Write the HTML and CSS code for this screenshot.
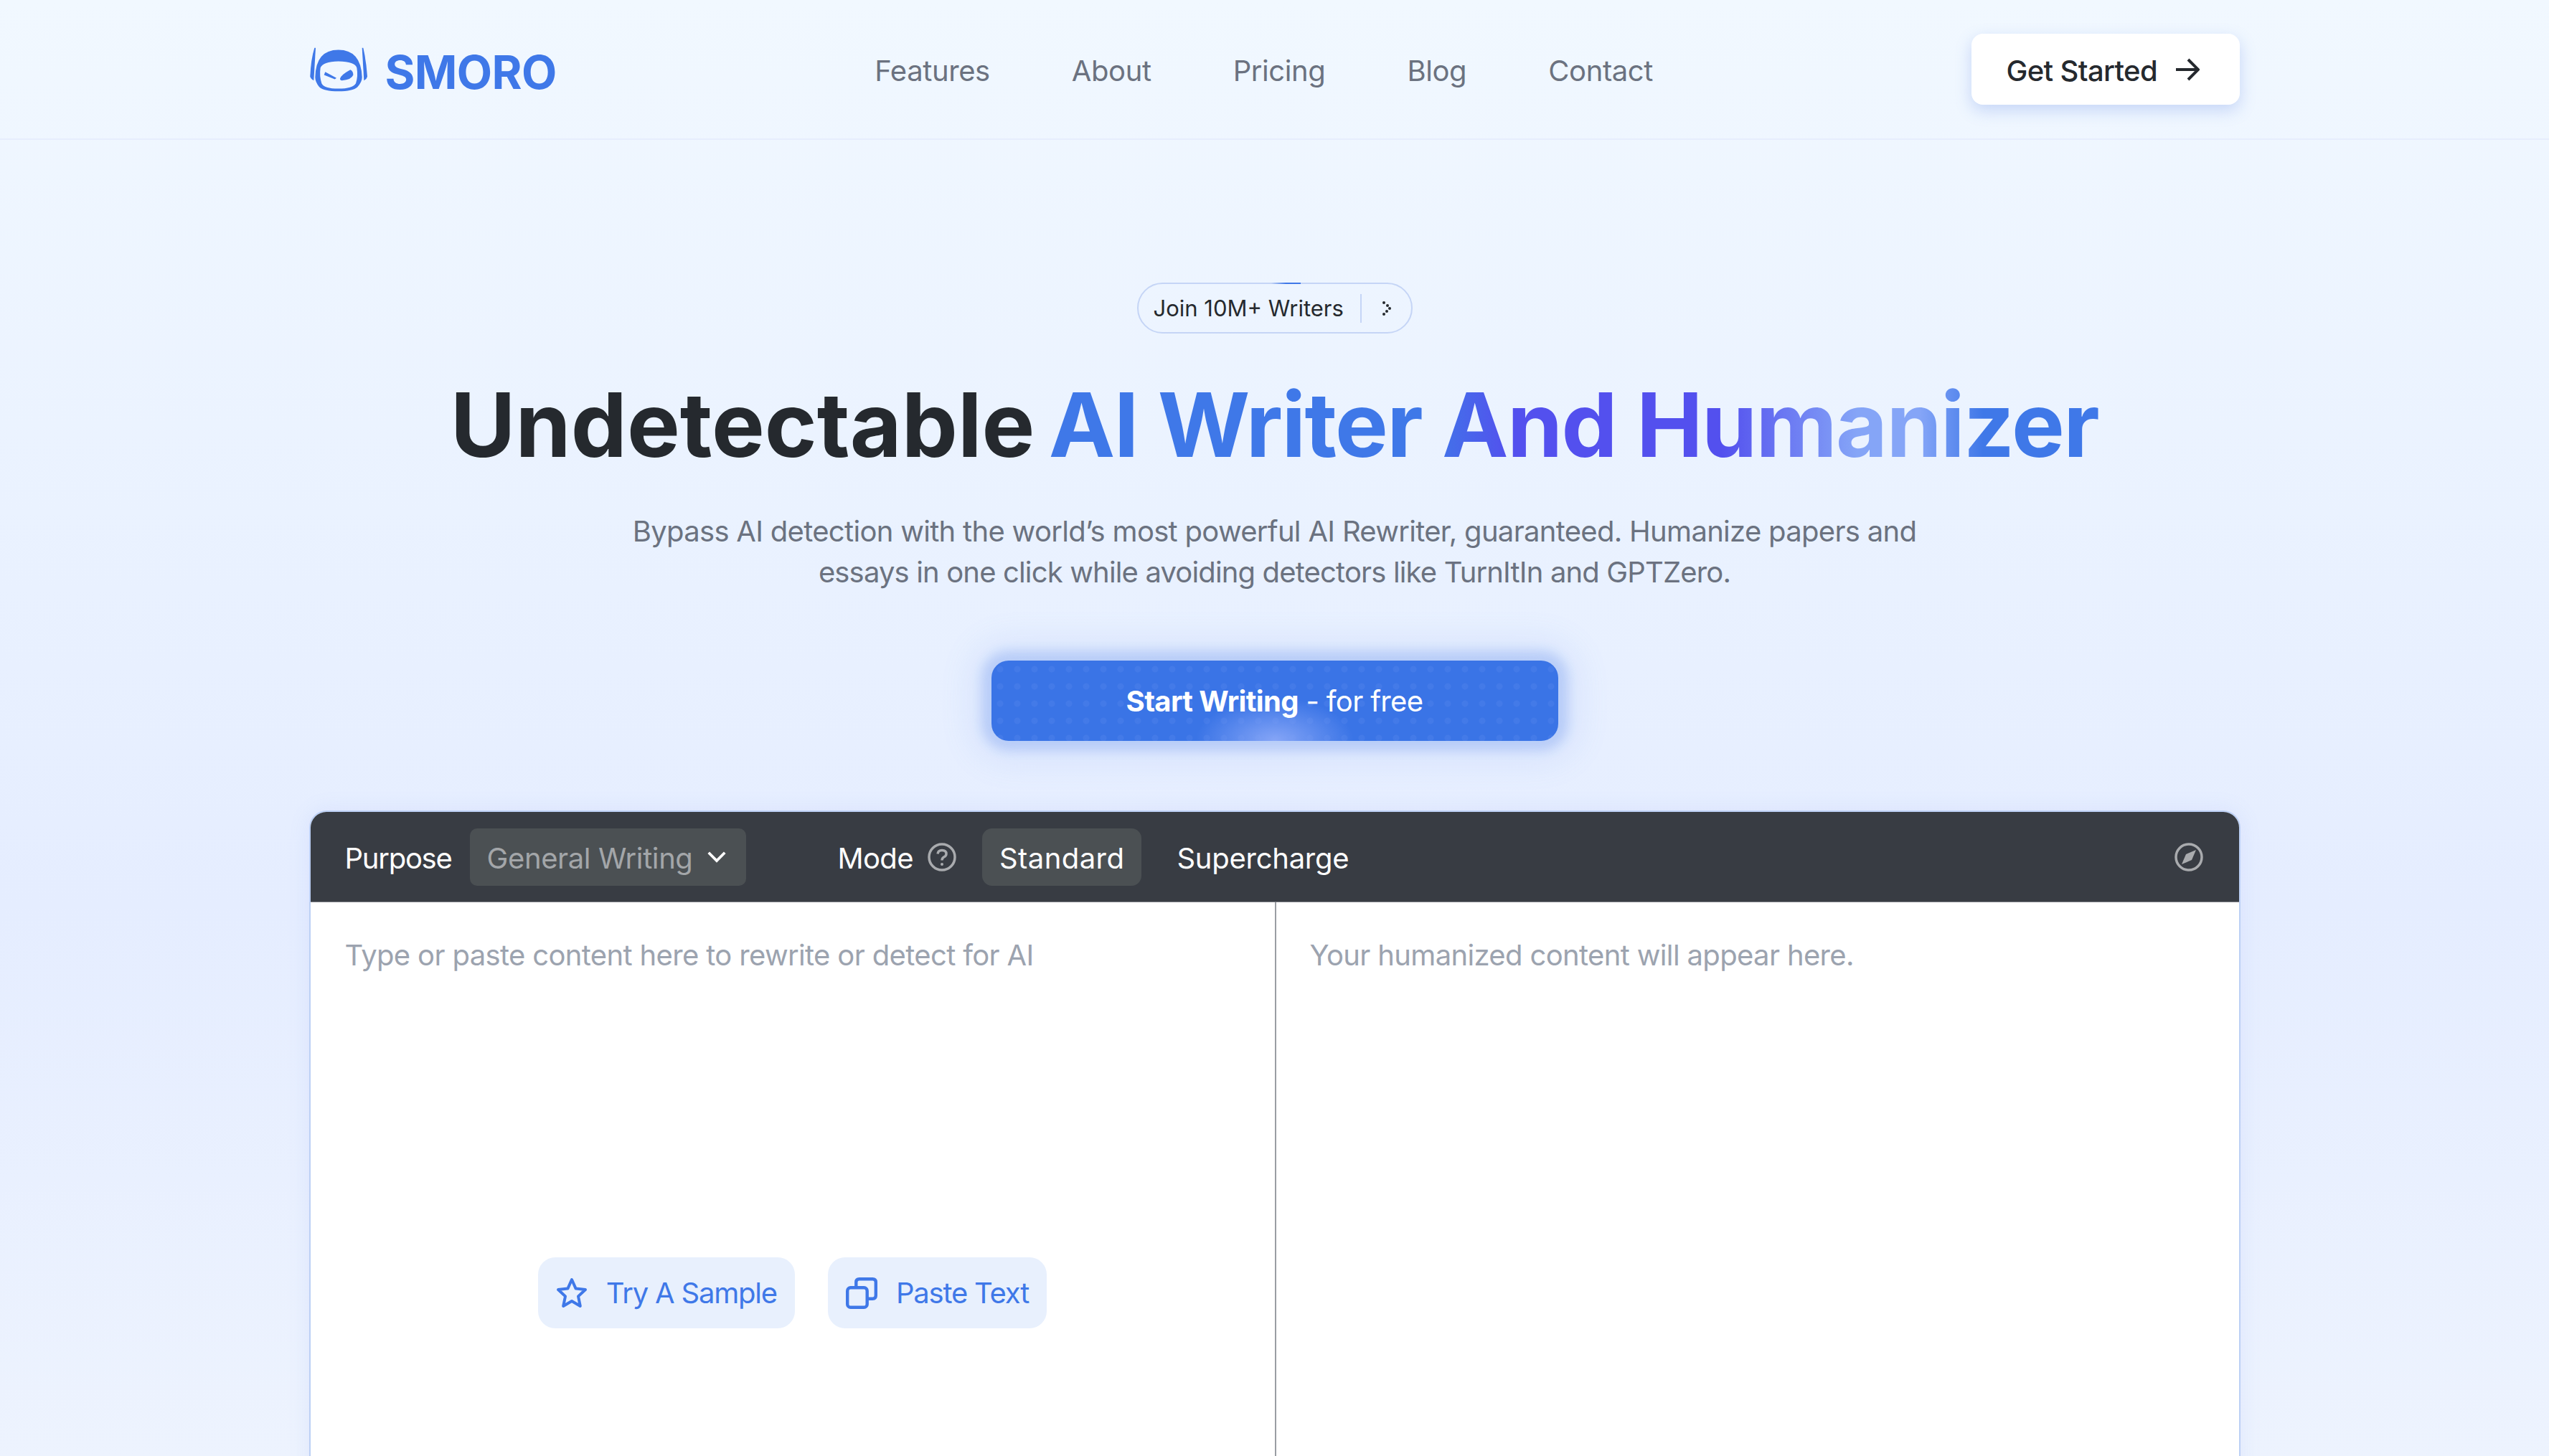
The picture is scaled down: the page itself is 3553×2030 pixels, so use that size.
FILE: index.html
```html
<!DOCTYPE html>
<html lang="en">
<head>
<meta charset="UTF-8">
<meta name="viewport" content="width=device-width, initial-scale=1.0">
<title>Smoro</title>
<link rel="stylesheet" href="styles.css">
</head>
<body>
<header class="nav">
    <div class="nav-inner">
        <a class="logo" href="#">
            <svg class="logo-icon" viewBox="36 50 240 185">
                <path d="M55 52 L60 52 L52 188 Q38 180 37 170 Q40 100 55 52 Z"/>
                <path d="M254 52 L259 52 Q272 110 276 172 Q274 182 262 188 Z"/>
                <path fill-rule="evenodd" d="M58 175 Q60 60 155 60 Q250 60 254 175 Q254 195 235 215 Q215 233 155 233 Q95 233 75 215 Q58 195 58 175 Z M80 135 Q90 110 155 108 Q225 110 232 135 Q238 170 228 200 Q215 222 155 222 Q95 222 85 200 Q75 170 80 135 Z"/>
                <path d="M100 152 L147 178 L140 183 L95 165 Z"/>
                <path d="M162 180 Q165 165 205 143 Q218 150 217 165 Q210 185 170 188 Q162 188 162 180 Z"/>
            </svg>
            <span class="logo-text">SMORO</span>
        </a>
        <nav class="nav-links">
            <a href="#">Features</a>
            <a href="#">About</a>
            <a href="#">Pricing</a>
            <a href="#">Blog</a>
            <a href="#">Contact</a>
        </nav>
        <a class="get-started" href="#">
            <span class="get-started-text">Get Started</span>
            <svg class="arrow" viewBox="0 0 34 32"><path d="M1 16 H32 M18 2 L32 16 L18 30"/></svg>
        </a>
    </div>
</header>

<main class="hero">
    <a class="badge" href="#">
        <span>Join 10M+ Writers</span>
        <span class="badge-sep"></span>
        <svg class="badge-chevron" viewBox="0 0 14 22"><circle cx="3" cy="3" r="2"/><circle cx="8" cy="7" r="2"/><circle cx="11" cy="11" r="2"/><circle cx="7" cy="15" r="2"/><circle cx="3" cy="19" r="2"/></svg>
    </a>
    <h1>Undetectable <span class="gradient">AI Writer And Humanizer</span></h1>
    <p class="lead">Bypass AI detection with the world’s most powerful AI Rewriter, guaranteed. Humanize papers and<br><span class="lead-second">essays in one click while avoiding detectors like TurnItIn and GPTZero.</span></p>
    <a class="cta" href="#"><span><strong>Start Writing</strong> - for free</span></a>
</main>

<section class="editor">
    <div class="toolbar">
        <span class="tool-label purpose-label">Purpose</span>
        <div class="select"><span class="tool-label">General Writing</span>
            <svg class="select-chevron" viewBox="0 0 24 14"><path d="M3 2 L12 11 L21 2"/></svg>
        </div>
        <span class="tool-label mode-label">Mode</span>
        <svg class="help" viewBox="0 0 40 40">
            <circle cx="20" cy="20" r="18"/>
            <path d="M14 15.5 Q14.5 10.5 20 10.5 Q26 10.5 26 15.5 Q26 18.5 22.5 20 Q20 21.5 20 24.5"/>
            <circle class="help-dot" cx="20" cy="30" r="2"/>
        </svg>
        <span class="mode active"><span class="tool-label">Standard</span></span>
        <span class="mode"><span class="tool-label">Supercharge</span></span>
        <svg class="compass" viewBox="0 0 40 40">
            <circle cx="20" cy="20" r="18"/>
            <path class="needle" d="M30 10 L24 24 L10 30 L16 16 Z"/>
        </svg>
    </div>
    <div class="panes">
        <div class="pane pane-left">
            <p class="placeholder">Type or paste content here to rewrite or detect for AI</p>
            <div class="actions">
                <button type="button" class="action">
                    <svg class="action-icon" viewBox="0 0 44 44"><path d="M22 3 L27.6 15.6 L41 17 L31 26.4 L33.8 40 L22 33 L10.2 40 L13 26.4 L3 17 L16.4 15.6 Z"/></svg>
                    Try A Sample
                </button>
                <button type="button" class="action">
                    <svg class="action-icon" viewBox="0 0 40 40"><rect x="2" y="13" width="25" height="25" rx="4"/><path d="M13 13 V6 Q13 2 17 2 H34 Q38 2 38 6 V23 Q38 27 34 27 H27"/></svg>
                    Paste Text
                </button>
            </div>
        </div>
        <div class="pane pane-right">
            <p class="placeholder">Your humanized content will appear here.</p>
        </div>
    </div>
</section>
</body>
</html>
```

FILE: styles.css
```css
html, body {
    height: 2030px;
    overflow: hidden;
}
body {
    margin: 0;
    font-family: Inter, "Liberation Sans", sans-serif;
    letter-spacing: -0.65px;
    color: #25292e;
    background: linear-gradient(180deg, #f1f8ff 0%, #eaf2ff 35%, #e5edff 62%, #edf3fe 100%);
}
a {
    color: inherit;
    text-decoration: none;
}

/* top bar */
.nav {
    height: 193px;
    border-bottom: 2px solid #e6edfd;
}
.nav-inner {
    width: 2690px;
    height: 100%;
    margin: 0 auto;
    display: flex;
    align-items: center;
    justify-content: space-between;
}
.logo {
    display: flex;
    align-items: center;
    gap: 25px;
    color: #3f78e8;
    font-size: 64px;
    font-weight: 700;
    letter-spacing: -0.6px;
}
.logo-text {
    padding-top: 7px;
}
.logo-icon {
    width: 80px;
    height: 62px;
    fill: #3f78e8;
}
.nav-links {
    display: flex;
    gap: 114px;
    padding-top: 3px;
    font-size: 40px;
    letter-spacing: -0.4px;
    color: #6b7280;
}
.get-started {
    box-sizing: border-box;
    width: 374px;
    height: 99px;
    padding-left: 49px;
    display: flex;
    align-items: center;
    gap: 25px;
    font-size: 40px;
    font-weight: 500;
    background: #fff;
    border-radius: 16px;
    box-shadow: 0 8px 22px rgba(90, 130, 225, 0.28);
}
.get-started-text {
    padding-top: 3px;
}
.arrow {
    width: 34px;
    height: 32px;
    fill: none;
    stroke: #25292e;
    stroke-width: 4;
}

/* hero */
.hero {
    padding-top: 199px;
    display: flex;
    flex-direction: column;
    align-items: center;
    text-align: center;
}
.badge {
    position: relative;
    box-sizing: border-box;
    width: 384px;
    height: 71px;
    padding-left: 21px;
    display: flex;
    align-items: center;
    font-size: 31px;
    letter-spacing: 0;
    border: 2px solid #c5d5f6;
    border-radius: 36px;
}
.badge::before {
    content: "";
    position: absolute;
    top: -2px;
    left: 185px;
    width: 41px;
    height: 2px;
    background: linear-gradient(90deg, transparent, #3f78e8 50%);
}
.badge-sep {
    width: 2px;
    height: 40px;
    margin-left: 23px;
    background: #c5d5f6;
}
.badge-chevron {
    width: 14px;
    height: 22px;
    margin-left: 28px;
    fill: #25292e;
}
h1 {
    margin: 52px 0 0;
    font-size: 124px;
    line-height: 150px;
    font-weight: 700;
    letter-spacing: 0;
}
.gradient {
    margin-left: -10px;
    letter-spacing: -1.6px;
    background: linear-gradient(90deg, #3f78e8 0%, #3f78e8 36%, #5350ee 44%, #5350ee 64%, #85a5f7 77%, #85a5f7 83%, #3f78e8 89%, #3f78e8 100%);
    -webkit-background-clip: text;
    background-clip: text;
    color: transparent;
}
.lead {
    margin: 45px 0 0;
    font-size: 40px;
    line-height: 57px;
    letter-spacing: -0.7px;
    color: #6b7280;
}
.lead-second {
    letter-spacing: -0.85px;
}
.cta {
    margin-top: 95px;
    width: 790px;
    height: 112px;
    display: flex;
    align-items: center;
    justify-content: center;
    font-size: 40px;
    color: #fff;
    border-radius: 24px;
    background:
        radial-gradient(ellipse 110px 60px at 50% 100%, #85a5f7, rgba(133, 165, 247, 0)),
        radial-gradient(circle, rgba(133, 165, 247, 0.12) 4px, transparent 5px) 0 0 / 24px 24px,
        #3a74e6;
    box-shadow: 0 0 14px 14px rgba(58, 116, 230, 0.2), 0 0 44px 30px rgba(110, 150, 240, 0.12);
}
.cta strong {
    font-weight: 700;
}

/* editor panel */
.editor {
    box-sizing: border-box;
    width: 2692px;
    height: 1100px;
    margin: 97px auto 0;
    border: 2px solid #bcd0f5;
    border-bottom: 0;
    border-radius: 24px 24px 0 0;
    background: #fff;
    overflow: hidden;
    box-shadow: 0 0 30px rgba(120, 150, 240, 0.12);
}
.toolbar {
    height: 125px;
    padding: 0 48px;
    display: flex;
    align-items: center;
    font-size: 40px;
    color: #fff;
    background: #383c43;
    border-bottom: 1px solid #7c7f85;
}
.tool-label {
    padding-top: 3px;
}
.purpose-label {
    letter-spacing: -1.25px;
}
.select {
    box-sizing: border-box;
    width: 385px;
    height: 80px;
    margin-left: 25px;
    padding: 0 26px 0 24px;
    display: flex;
    align-items: center;
    justify-content: space-between;
    color: #a3a6a9;
    letter-spacing: -0.4px;
    background: #4b5053;
    border-radius: 10px;
}
.select-chevron {
    width: 30px;
    height: 18px;
    fill: none;
    stroke: #fff;
    stroke-width: 3;
}
.mode-label {
    margin-left: 128px;
}
.help {
    width: 40px;
    height: 40px;
    margin-left: 20px;
    fill: none;
    stroke: #a9abae;
    stroke-width: 3.5;
}
.help .help-dot {
    fill: #a9abae;
    stroke: none;
}
.mode {
    height: 80px;
    margin-left: 25px;
    padding: 0 24px;
    display: flex;
    align-items: center;
    letter-spacing: -0.25px;
    border-radius: 14px;
}
.mode.active {
    margin-left: 36px;
    letter-spacing: 0.45px;
    background: #4b5053;
}
.compass {
    width: 40px;
    height: 40px;
    margin-left: auto;
    margin-right: 2px;
    fill: none;
    stroke: #a9abae;
    stroke-width: 3.5;
}
.compass .needle {
    fill: #a9abae;
    stroke: none;
}
.panes {
    display: grid;
    grid-template-columns: 1346px 1fr;
    height: 100%;
}
.pane {
    padding: 45px 48px 0;
}
.pane-left {
    border-right: 2px solid #9a9da3;
}
.pane-right {
    padding-left: 47px;
}
.placeholder {
    margin: 0;
    font-size: 40px;
    line-height: 57px;
    color: #9ca3af;
}
.actions {
    margin-top: 393px;
    display: flex;
    justify-content: center;
    gap: 46px;
}
.action {
    height: 99px;
    padding: 0 25px;
    display: flex;
    align-items: center;
    gap: 26px;
    font-family: inherit;
    font-size: 40px;
    letter-spacing: -1.2px;
    color: #3f78e8;
    background: #e8f0fd;
    border: 0;
    border-radius: 24px;
}
.action-icon {
    width: 44px;
    height: 44px;
    fill: none;
    stroke: #3f78e8;
    stroke-width: 4;
    stroke-linejoin: round;
}
```
